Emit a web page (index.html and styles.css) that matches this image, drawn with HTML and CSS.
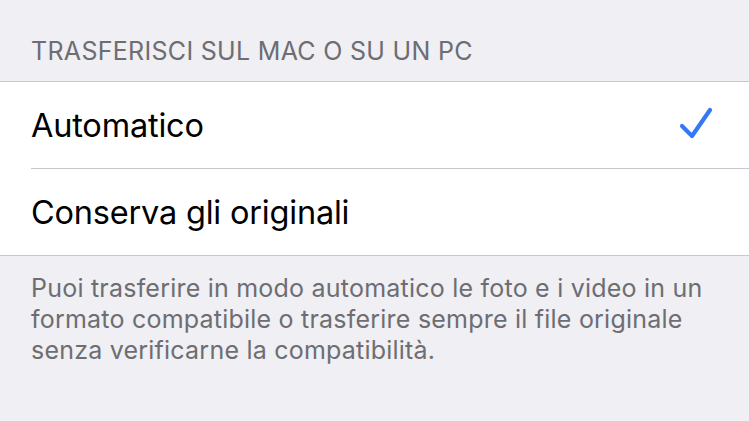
FILE: index.html
```html
<!DOCTYPE html>
<html lang="it">
<head>
<meta charset="utf-8">
<link rel="stylesheet" href="styles.css">
</head>
<body>
<div class="page">
  <div class="section-header">TRASFERISCI SUL MAC O SU UN PC</div>
  <div class="group">
    <div class="row">
      <span class="label">Automatico</span>
      <svg class="check" width="34" height="34" viewBox="0 0 34 34"><path d="M3 20 L13 30 L31 4" fill="none" stroke="#3478f6" stroke-width="4.2" stroke-linecap="round" stroke-linejoin="round"/></svg>
    </div>
    <div class="row">
      <span class="label">Conserva gli originali</span>
    </div>
  </div>
  <div class="footer">Puoi trasferire in modo automatico le foto e i video in un formato compatibile o trasferire sempre il file originale senza verificarne la compatibilità.</div>
</div>
</body>
</html>
```
FILE: styles.css
```css
html, body {
  margin: 0;
  padding: 0;
  background: #efeff4;
}
.page {
  width: 749px;
  height: 421px;
  overflow: hidden;
  font-family: Inter, "Noto Sans", sans-serif;
}
.section-header {
  padding: 36px 0 0 31px;
  height: 81px;
  box-sizing: border-box;
  font-size: 25px;
  color: #6d6d72;
  line-height: 30px;
  letter-spacing: 0.3px;
}
.group {
  background: #fff;
  border-top: 1px solid #c8c7cc;
  border-bottom: 1px solid #c8c7cc;
  padding-left: 31px;
}
.row {
  height: 86px;
  display: flex;
  align-items: center;
  justify-content: space-between;
  padding-right: 36px;
}
.row + .row {
  border-top: 1px solid #c8c7cc;
  height: 86px;
}
.label {
  font-size: 32.5px;
  color: #000;
  letter-spacing: -0.2px;
}
.check {
  margin-top: -4px;
}
.footer {
  padding: 17px 30px 0 31px;
  font-size: 25px;
  line-height: 31px;
  color: #6d6d72;
  letter-spacing: 0.22px;
}
```
